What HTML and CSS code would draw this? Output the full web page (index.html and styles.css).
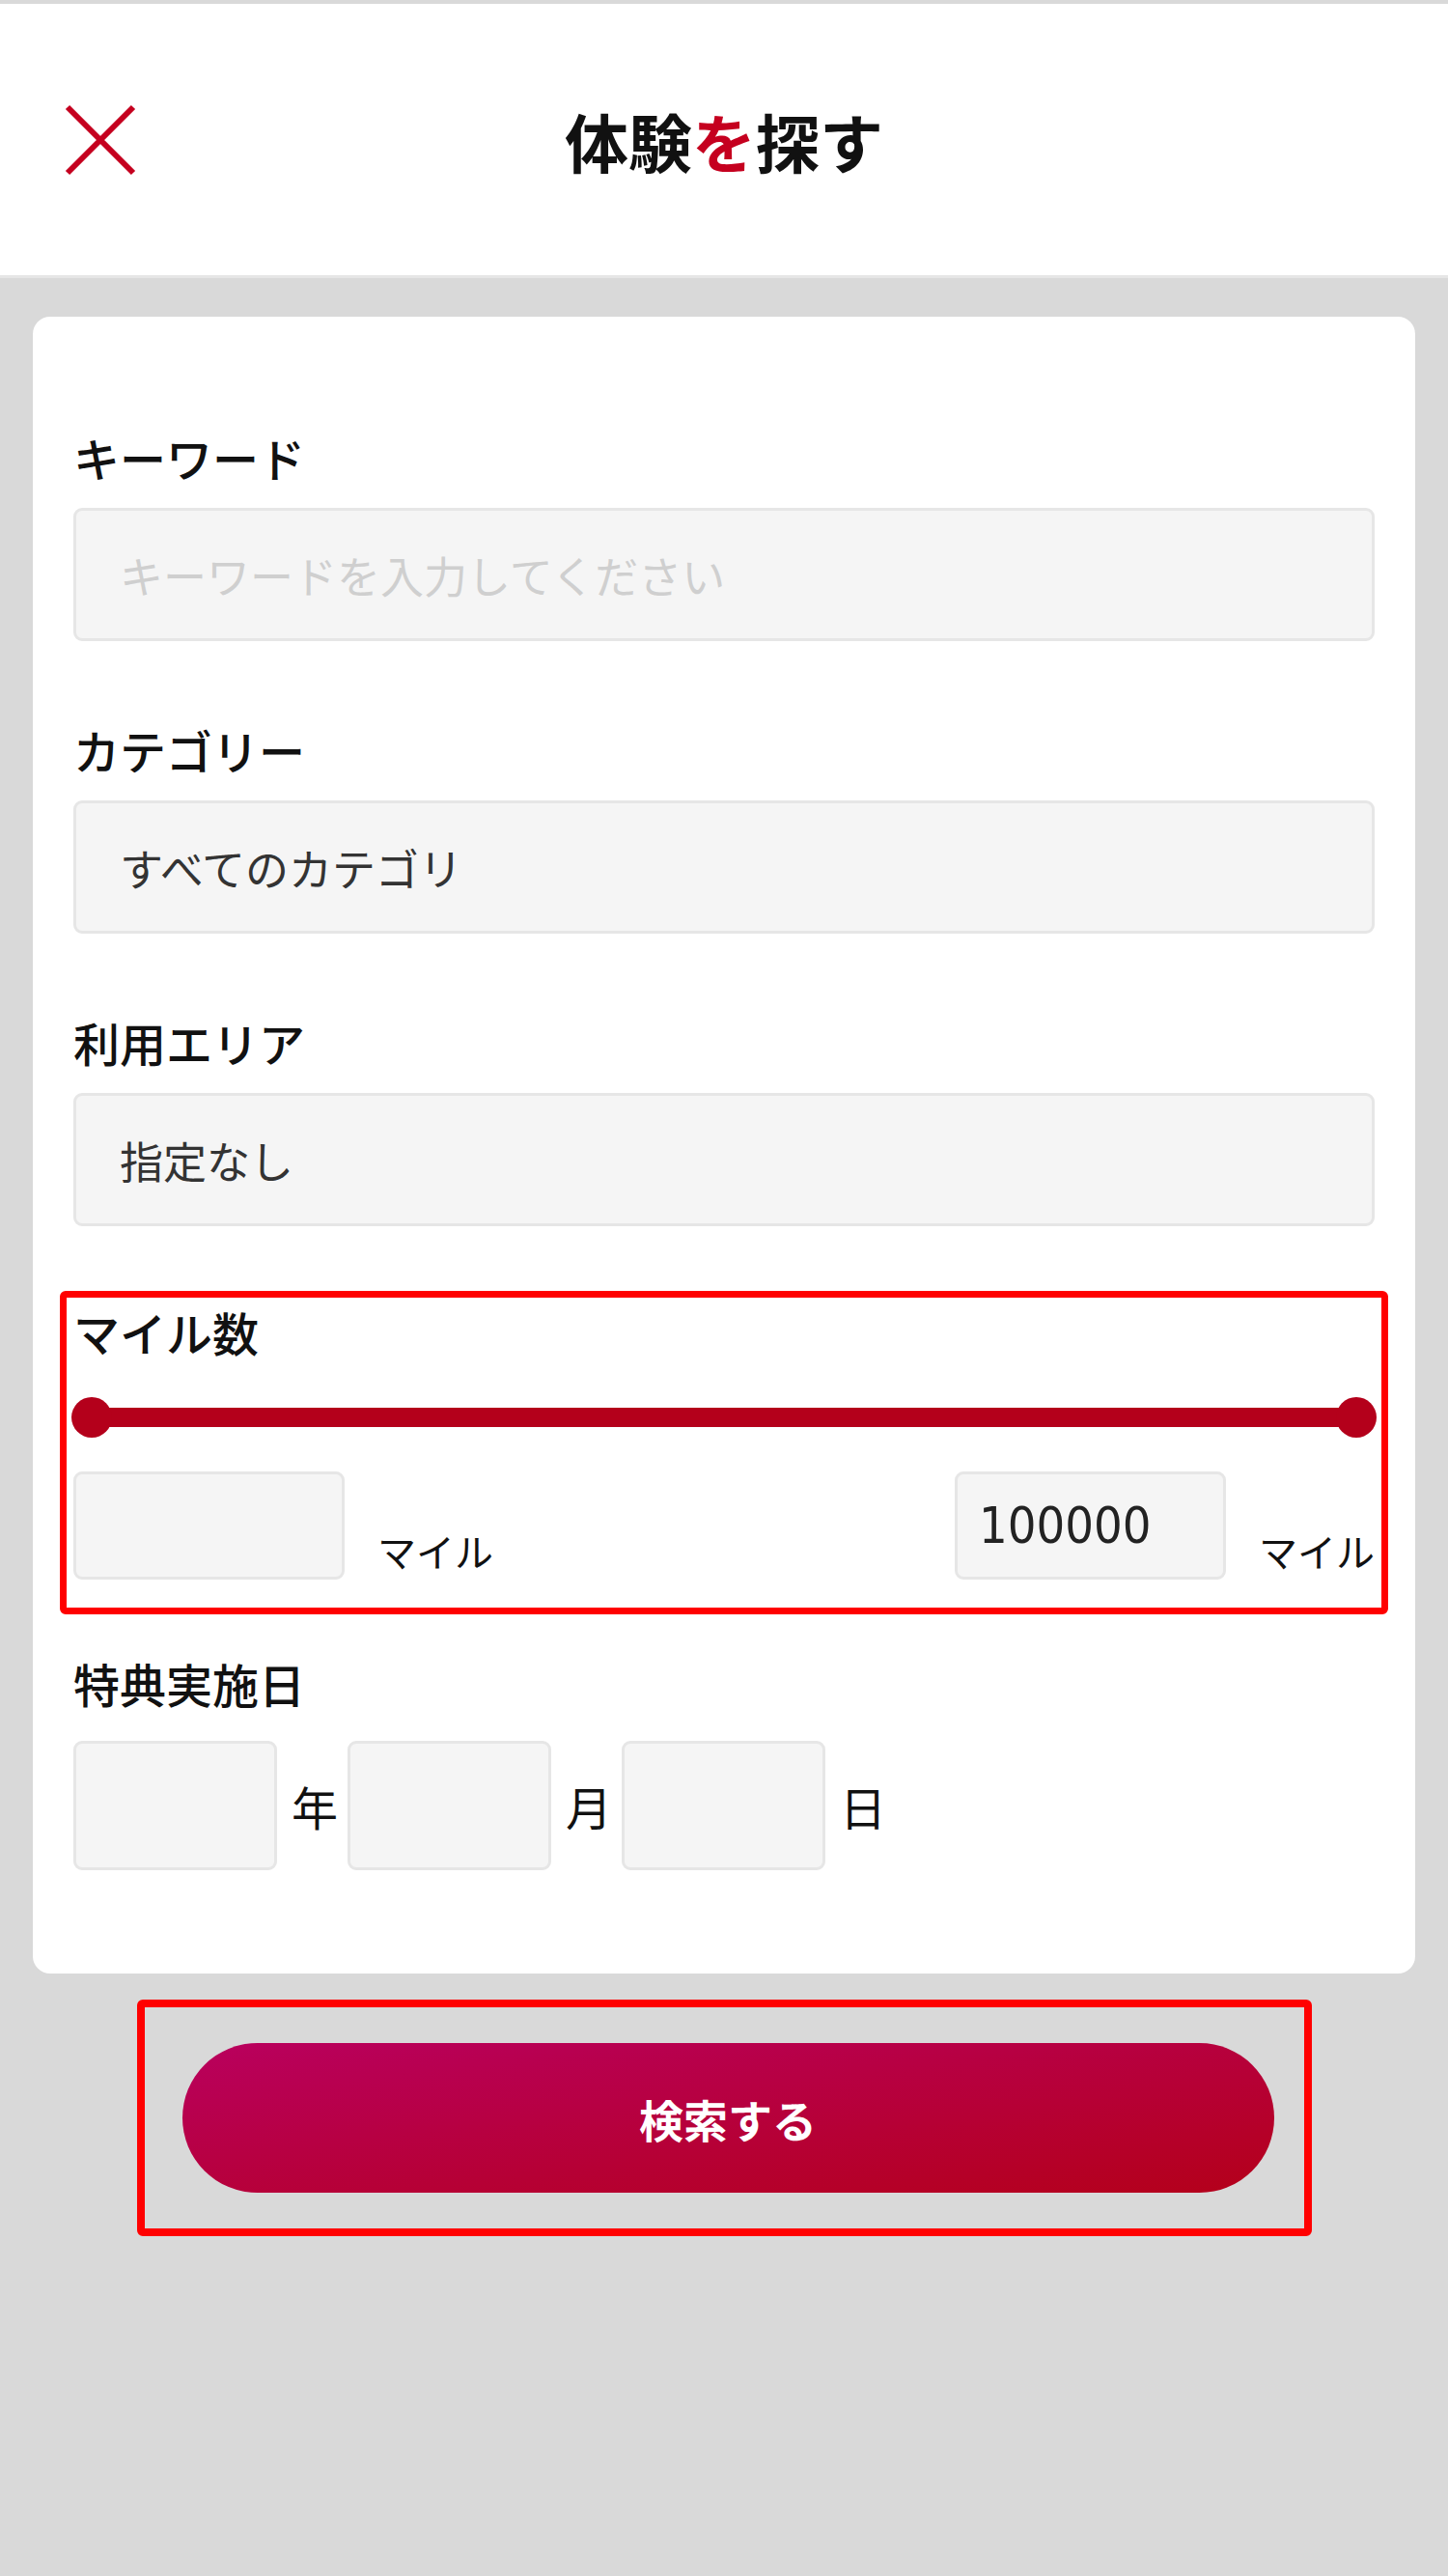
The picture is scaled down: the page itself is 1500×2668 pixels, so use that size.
FILE: index.html
```html
<!DOCTYPE html>
<html lang="ja">
<head>
<meta charset="utf-8">
<title>体験を探す</title>
<link rel="stylesheet" href="styles.css">
</head>
<body>
<header class="topbar">
  <button class="close" aria-label="閉じる">
    <svg width="76" height="76" viewBox="0 0 76 76"><path d="M4 4 L72 72 M72 4 L4 72" stroke="#c5001f" stroke-width="6" fill="none"/></svg>
  </button>
  <h1 class="title">体験<span class="accent">を</span>探す</h1>
  <span class="spacer"></span>
</header>

<main class="main">
  <section class="card">
    <div class="field">
      <p class="label">キーワード</p>
      <input class="text-input" type="text" placeholder="キーワードを入力してください">
    </div>
    <div class="field field-next">
      <p class="label">カテゴリー</p>
      <div class="text-input select">すべてのカテゴリ</div>
    </div>
    <div class="field field-next">
      <p class="label">利用エリア</p>
      <div class="text-input select">指定なし</div>
    </div>

    <div class="hl">
      <p class="label label-miles">マイル数</p>
      <div class="slider">
        <div class="track"></div>
        <span class="thumb thumb-min"></span>
        <span class="thumb thumb-max"></span>
      </div>
      <div class="mile-row">
        <div class="mile-group">
          <input class="mile-input" type="text" value="">
          <span class="unit">マイル</span>
        </div>
        <div class="mile-group">
          <input class="mile-input" type="text" value="100000">
          <span class="unit">マイル</span>
        </div>
      </div>
    </div>

    <div class="field field-date">
      <p class="label label-date">特典実施日</p>
      <div class="date-row">
        <input class="date-input" type="text">
        <span class="date-unit">年</span>
        <input class="date-input" type="text">
        <span class="date-unit">月</span>
        <input class="date-input" type="text">
        <span class="date-unit">日</span>
      </div>
    </div>
  </section>

  <div class="actions">
    <div class="hl-btn">
      <button class="search">検索する</button>
    </div>
  </div>
</main>
</body>
</html>
```
FILE: styles.css
```css
* { box-sizing: border-box; }
html, body { margin: 0; }
body {
  background: #d9d9d9;
  font-family: "Noto Sans CJK JP", "Noto Sans", sans-serif;
  color: #111;
  min-height: 2668px;
}

.topbar {
  margin-top: 4px;
  height: 284px;
  background: #fff;
  border-bottom: 3px solid #e6e6e6;
  display: grid;
  grid-template-columns: 1fr auto 1fr;
  align-items: center;
}
.close {
  justify-self: start;
  margin-left: 66px;
  width: 76px;
  height: 76px;
  padding: 0;
  border: 0;
  background: none;
  display: block;
}
.close svg { display: block; }
.title {
  margin: 0;
  font-size: 66px;
  font-weight: 700;
  line-height: 1;
  color: #111;
}
.accent { color: #c5001f; }

.main { padding-top: 40px; }

.card {
  margin: 0 34px;
  background: #fff;
  border-radius: 18px;
  padding: 113px 42px 107px;
}

.label {
  margin: 0 0 21px;
  font-size: 48px;
  line-height: 64px;
  font-weight: 500;
  color: #111;
}
.field-next { margin-top: 80px; }

.text-input {
  display: block;
  width: 100%;
  height: 138px;
  border: 3px solid #e6e6e6;
  border-radius: 9px;
  background: #f5f5f5;
  padding: 0 45px;
  font-family: "Noto Sans CJK JP", "Noto Sans", sans-serif;
  font-size: 45px;
  font-weight: 400;
  color: #333;
  outline: none;
}
.text-input::placeholder { color: #cfcfcf; }
.select {
  display: flex;
  align-items: center;
}

.hl {
  margin: 67px -14px 0;
  border: 7px solid #ff0000;
  border-radius: 6px;
  padding: 3px 7px 29px;
}
.label-miles { margin-bottom: 35px; }

.slider {
  position: relative;
  height: 44px;
  margin: 0 -2px;
  padding: 0 21px;
  display: flex;
  align-items: center;
}
.track {
  flex: 1;
  height: 20px;
  background: #b4001b;
}
.thumb {
  position: absolute;
  top: 1px;
  width: 42px;
  height: 42px;
  border-radius: 50%;
  background: #b4001b;
}
.thumb-min { left: 0; }
.thumb-max { right: 0; }

.mile-row {
  margin-top: 34px;
  display: flex;
  justify-content: space-between;
  align-items: flex-end;
}
.mile-group {
  display: flex;
  align-items: flex-end;
  gap: 34px;
}
.mile-input {
  width: 281px;
  height: 112px;
  border: 3px solid #e6e6e6;
  border-radius: 9px;
  background: #f5f5f5;
  padding: 0 22px;
  font-family: "DejaVu Sans Condensed", "DejaVu Sans", sans-serif;
  font-stretch: condensed;
  font-size: 52px;
  color: #222;
  outline: none;
}
.unit {
  font-size: 40px;
  line-height: 60px;
  color: #111;
}

.field-date { margin-top: 39px; }
.label-date { margin-bottom: 28px; }
.date-row {
  display: flex;
  align-items: center;
}
.date-input {
  width: 211px;
  height: 134px;
  border: 3px solid #e6e6e6;
  border-radius: 9px;
  background: #f5f5f5;
  outline: none;
}
.date-unit {
  margin: 0 10px 0 15px;
  font-size: 48px;
  line-height: 1;
  color: #111;
}

.actions {
  margin-top: 27px;
  display: flex;
  justify-content: center;
}
.hl-btn {
  width: 1217px;
  border: 8px solid #ff0000;
  border-radius: 6px;
  padding: 37px 31px 37px 39px;
}
.search {
  display: flex;
  align-items: center;
  justify-content: center;
  width: 1131px;
  height: 155px;
  border: 0;
  border-radius: 78px;
  background: linear-gradient(to bottom right, #b9005e, #b4001a);
  color: #fff;
  font-family: "Noto Sans CJK JP", "Noto Sans", sans-serif;
  font-size: 46px;
  font-weight: 700;
}
```
